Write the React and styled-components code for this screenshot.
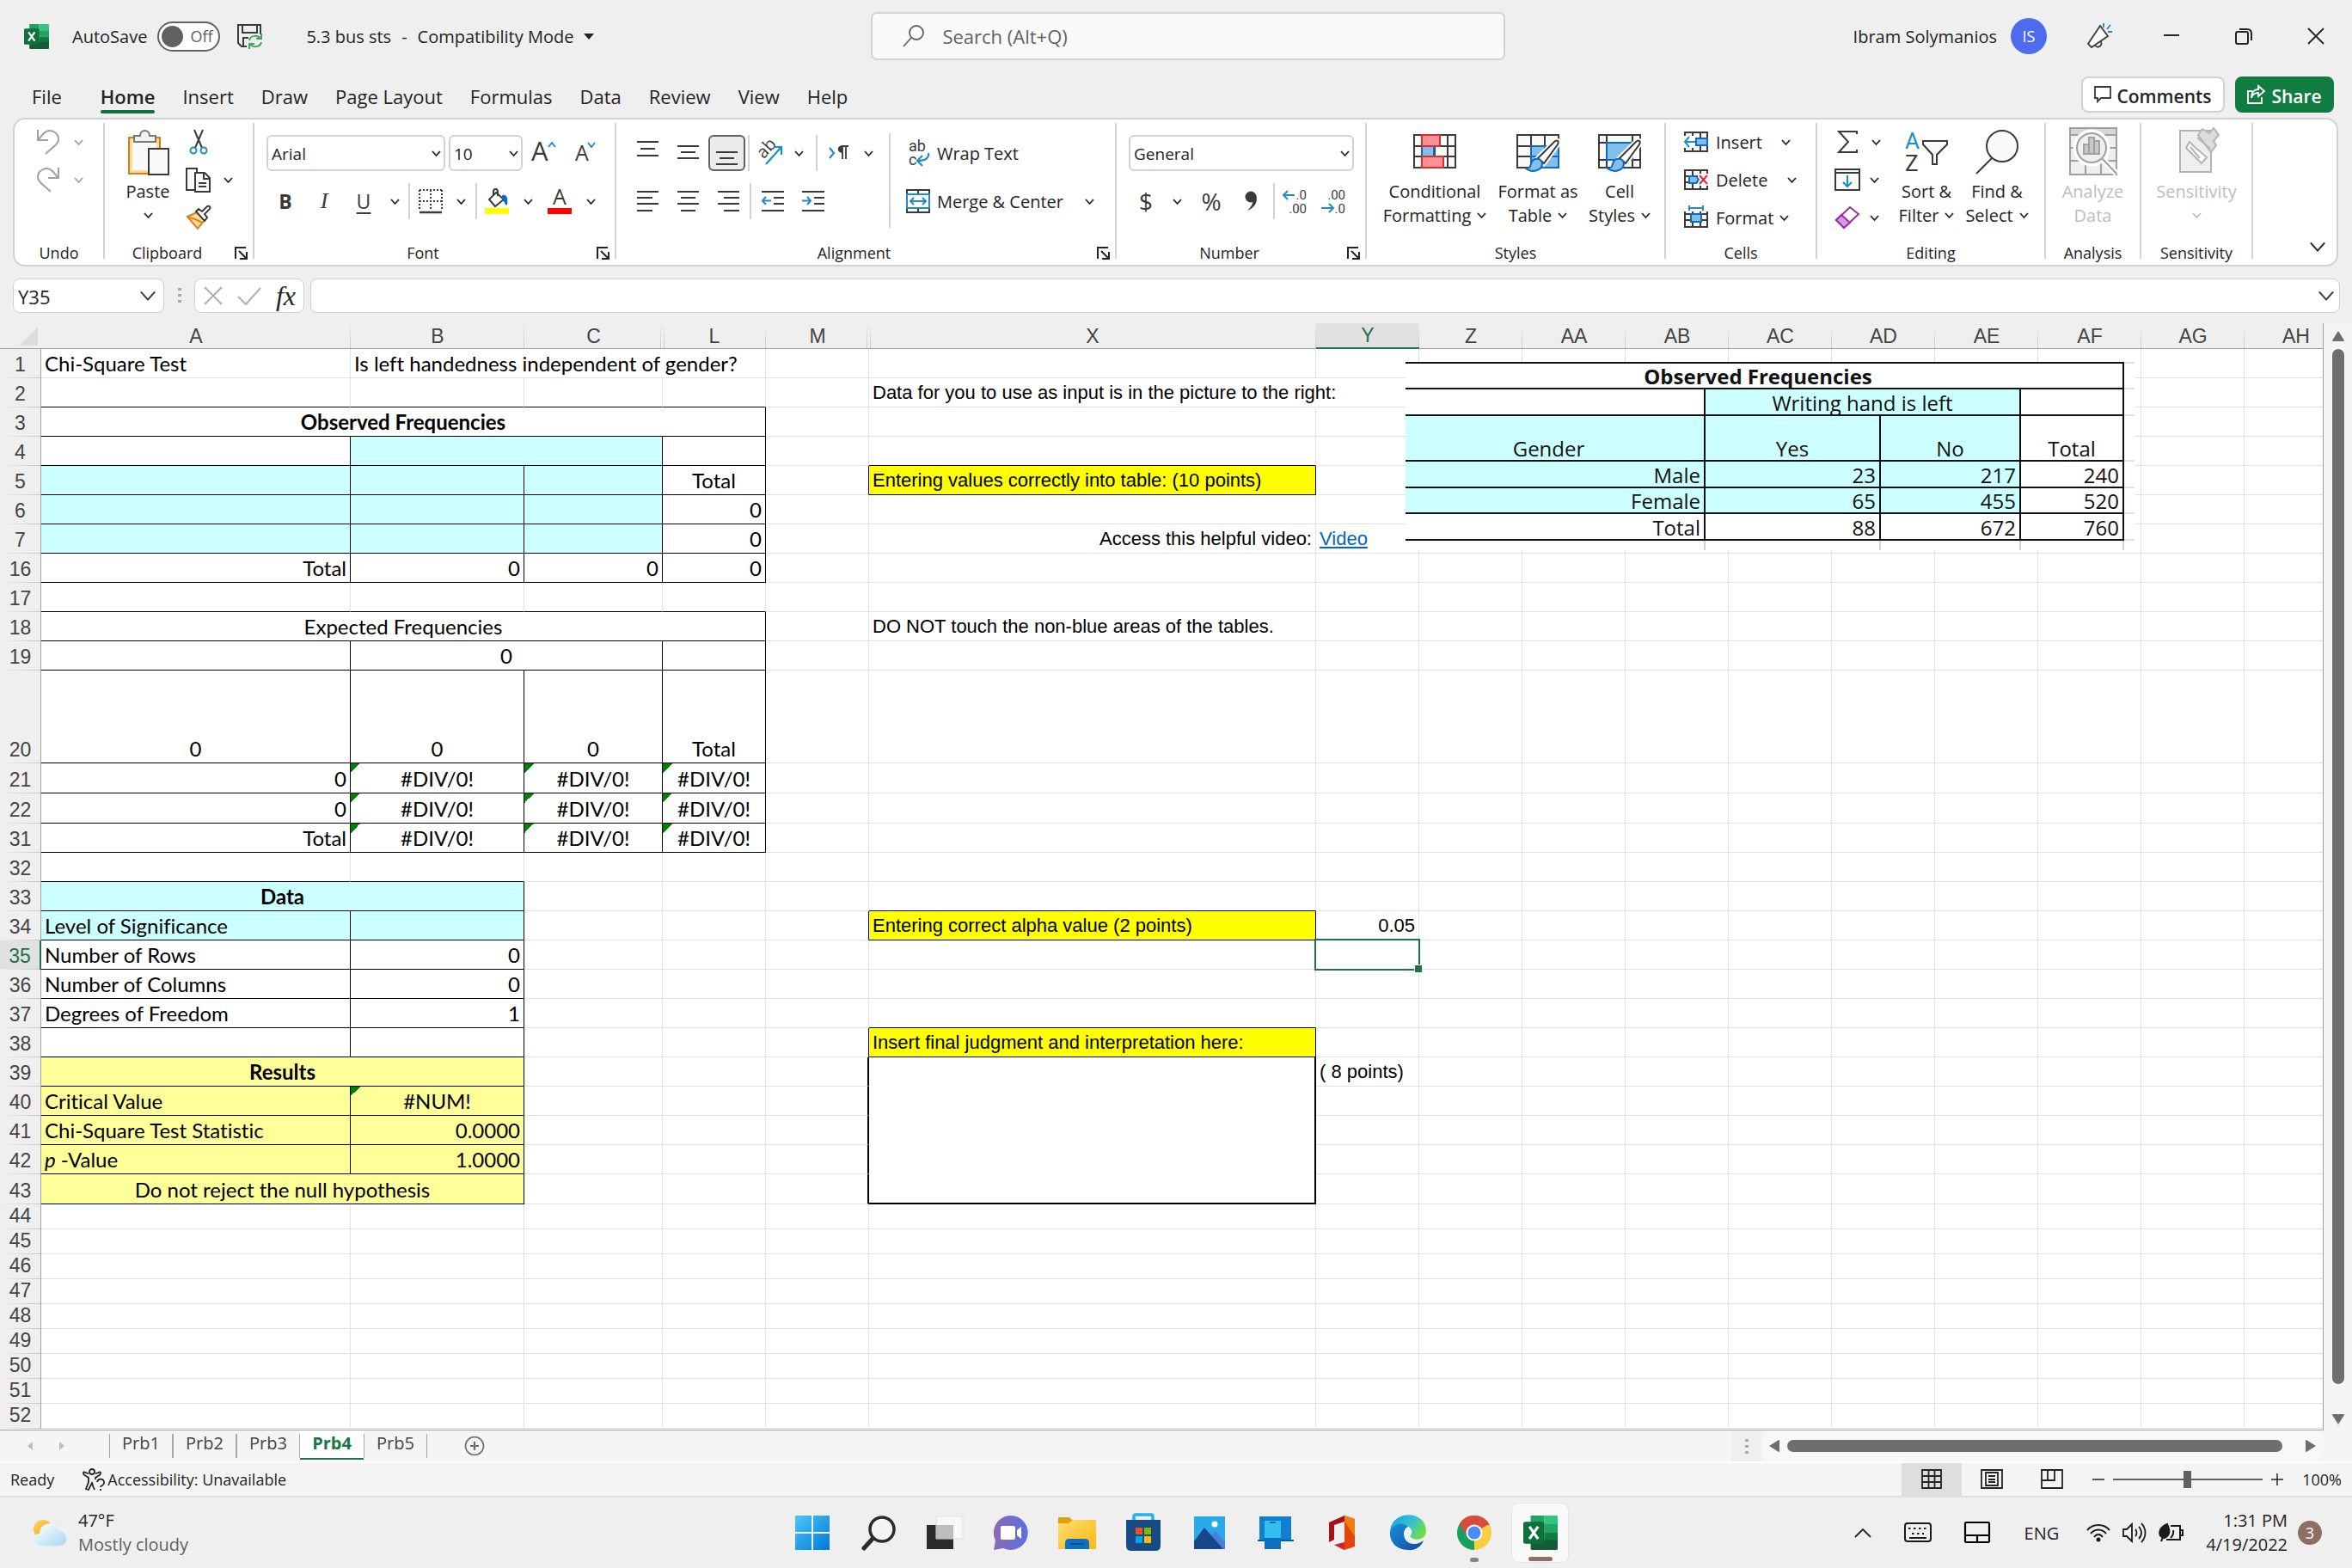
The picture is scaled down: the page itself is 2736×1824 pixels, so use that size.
import React, { useState } from 'react'
import styled, { createGlobalStyle, css } from 'styled-components'

const dark = '#3b3a38'
const blue = '#1e8bcd'
const green = '#217346'

/* ---------- sheet data ---------- */

const columns = [
  { name: 'A', width: 360 },
  { name: 'B', width: 202 },
  { name: 'C', width: 161, hiddenAfter: true },
  { name: 'L', width: 120, hiddenBefore: true },
  { name: 'M', width: 120, hiddenAfter: true },
  { name: 'X', width: 520, hiddenBefore: true },
  { name: 'Y', width: 120 },
  { name: 'Z', width: 120 },
  { name: 'AA', width: 120 },
  { name: 'AB', width: 120 },
  { name: 'AC', width: 120 },
  { name: 'AD', width: 120 },
  { name: 'AE', width: 120 },
  { name: 'AF', width: 120 },
  { name: 'AG', width: 120 },
  { name: 'AH' },
]

const rowNumbers = [
  1, 2, 3, 4, 5, 6, 7, 16, 17, 18, 19, 20, 21, 22, 31, 32, 33, 34, 35, 36, 37, 38,
  39, 40, 41, 42, 43, 44, 45, 46, 47, 48, 49, 50, 51, 52,
]

const rowHeight = (n) => {
  if (n === 20) return 108
  if (n === 21 || n === 22 || n === 43) return 35
  return n > 43 ? 29 : 34
}

const cyan = '#ccffff'
const paleYellow = '#ffff99'
const yellow = '#ffff00'

const cells = {
  A1: { text: 'Chi-Square Test' },
  B1: { text: 'Is left handedness independent of gender?', span: 3 },
  X2: { text: 'Data for you to use as input is in the picture to the right:', span: 2, arial: true },
  A3: { text: 'Observed Frequencies', span: 4, align: 'center', bold: true },
  B4: { span: 2, fill: cyan },
  A5: { fill: cyan },
  B5: { fill: cyan },
  C5: { fill: cyan },
  L5: { text: 'Total', align: 'center' },
  X5: { text: 'Entering values correctly into table: (10 points)', fill: yellow, arial: true },
  A6: { fill: cyan },
  B6: { fill: cyan },
  C6: { fill: cyan },
  L6: { text: '0', align: 'right' },
  A7: { fill: cyan },
  B7: { fill: cyan },
  C7: { fill: cyan },
  L7: { text: '0', align: 'right' },
  X7: { text: 'Access this helpful video:', align: 'right', arial: true },
  Y7: { text: 'Video', link: true, arial: true },
  A16: { text: 'Total', align: 'right' },
  B16: { text: '0', align: 'right' },
  C16: { text: '0', align: 'right' },
  L16: { text: '0', align: 'right' },
  A18: { text: 'Expected Frequencies', span: 4, align: 'center' },
  X18: { text: 'DO NOT touch the non-blue areas of the tables.', arial: true },
  B19: { text: '0', span: 2, align: 'center' },
  A20: { text: '0', align: 'center' },
  B20: { text: '0', align: 'center' },
  C20: { text: '0', align: 'center' },
  L20: { text: 'Total', align: 'center' },
  A21: { text: '0', align: 'right' },
  A22: { text: '0', align: 'right' },
  A31: { text: 'Total', align: 'right' },
  A33: { text: 'Data', span: 2, align: 'center', bold: true, fill: cyan },
  A34: { text: 'Level of Significance', fill: cyan },
  B34: { fill: cyan },
  X34: { text: 'Entering correct alpha value (2 points)', fill: yellow, arial: true },
  Y34: { text: '0.05', align: 'right', arial: true },
  A35: { text: 'Number of Rows' },
  B35: { text: '0', align: 'right' },
  A36: { text: 'Number of Columns' },
  B36: { text: '0', align: 'right' },
  A37: { text: 'Degrees of Freedom' },
  B37: { text: '1', align: 'right' },
  X38: { text: 'Insert final judgment and interpretation here:', fill: yellow, arial: true },
  A39: { text: 'Results', span: 2, align: 'center', bold: true, fill: paleYellow },
  X39: { rows: 5 },
  Y39: { text: '( 8 points)', arial: true },
  A40: { text: 'Critical Value', fill: paleYellow },
  B40: { text: '#NUM!', align: 'center', error: true, fill: paleYellow },
  A41: { text: 'Chi-Square Test Statistic', fill: paleYellow },
  B41: { text: '0.0000', align: 'right', fill: paleYellow },
  A42: { text: <><i>p</i> -Value</>, fill: paleYellow },
  B42: { text: '1.0000', align: 'right', fill: paleYellow },
  A43: { text: 'Do not reject the null hypothesis', span: 2, align: 'center', fill: paleYellow },
}

;['B', 'C', 'L'].forEach((c) => {
  [21, 22, 31].forEach((r) => {
    cells[c + r] = { text: '#DIV/0!', align: 'center', error: true }
  })
})

// ranges that carry a border round every cell: first col, first row, last col, last row, width
const boxes = [
  ['A', 3, 'L', 16, 1],
  ['A', 18, 'L', 31, 1],
  ['A', 33, 'B', 43, 1],
  ['X', 5, 'X', 5, 1],
  ['X', 34, 'X', 34, 1],
  ['X', 38, 'X', 38, 1],
  ['X', 39, 'X', 43, 2],
]

const colIndex = (name) => columns.findIndex((c) => c.name === name)

function edges(c, r) {
  let right = 0
  let bottom = 0
  boxes.forEach(([c1, r1, c2, r2, w]) => {
    const left = colIndex(c1)
    const last = colIndex(c2)
    const top = rowNumbers.indexOf(r1)
    const end = rowNumbers.indexOf(r2)
    const inRows = r >= top && r <= end
    const inCols = c >= left && c <= last
    if (inRows && c >= left - 1 && c <= last) right = Math.max(right, w)
    if (inCols && inRows) bottom = Math.max(bottom, w)
    if (inCols && r === top - 1) bottom = Math.max(bottom, 1)
  })
  return { right, bottom }
}

/* ---------- icons ---------- */

const Chevron = ({ color = '#242424', size = 11 }) => (
  <svg width={size} height={size} viewBox="0 0 11 11" fill="none" stroke={color} strokeWidth={size > 14 ? 1.1 : 1.8}>
    <path d="M1 3l4.5 5L10 3" />
  </svg>
)

const Lines = ({ rows }) => (
  <svg width="28" height="28" viewBox="0 0 28 28" stroke={dark} strokeWidth="2">
    {rows.map(([x1, x2, y]) => <path key={y} d={`M${x1} ${y}H${x2}`} />)}
  </svg>
)

const UndoIcon = () => (
  <svg width="28" height="30" viewBox="0 0 28 30" fill="none" stroke="#a0a0a0" strokeWidth="2">
    <path d="M2 1v12h12M2 13l7-8c6-6 17-2 17 7 0 5-4 7-15 17" />
  </svg>
)

const RedoIcon = () => (
  <svg width="28" height="30" viewBox="0 0 28 30" fill="none" stroke="#a0a0a0" strokeWidth="2">
    <path d="M26 1v12H14M26 13l-7-8C13-1 2 3 2 12c0 5 4 7 15 17" />
  </svg>
)

const SaveIcon = () => (
  <svg width="30" height="30" viewBox="0 0 30 30" fill="none" stroke={dark} strokeWidth="2">
    <path d="M11 27H5l-4-4V2h26v11M6 2v9h17V2M7 27V17h6" />
    <g stroke="#3fa659">
      <path d="M14 20c1-6 10-7 13-2M28 12v6h-6M28 22c-1 6-10 7-13 2M14 30v-6h6" />
    </g>
  </svg>
)

const SearchIcon = () => (
  <svg width="26" height="28" viewBox="0 0 26 28" fill="none" stroke="#616161" strokeWidth="1.8">
    <circle cx="16" cy="10" r="8" />
    <path d="M10 16L1 26" />
  </svg>
)

const ExcelLogo = ({ size = 28 }) => (
  <svg width={size} height={size} viewBox="0 0 28 28">
    <path d="M6 0h11v7H6z" fill="#21a366" />
    <path d="M17 0h10q1 0 1 1v6H17z" fill="#33c481" />
    <path d="M6 7h11v14H6z" fill="#107c41" />
    <path d="M17 7h11v7H17z" fill="#21a366" />
    <path d="M17 14h11v7H17z" fill="#107c41" />
    <path d="M6 20h22v7q0 1-1 1H7q-1 0-1-1z" fill="#185c37" />
    <rect x="0" y="5" width="17" height="18" rx="1.5" fill="#0e703b" />
    <path d="M5 9l7 10M12 9L5 19" stroke="#fff" strokeWidth="2.2" />
  </svg>
)

const MegaphoneIcon = () => (
  <svg width="32" height="32" viewBox="0 0 32 32" fill="#fff" stroke={dark} strokeWidth="1.8">
    <path d="M17 4l9 12L7 29l-4-4zM11 26c2 5 9 2 7-4" />
    <path d="M21 1v5M29 3l-4 5M26 11h5" stroke={blue} />
  </svg>
)

const PasteIcon = () => (
  <svg width="52" height="56" viewBox="0 0 52 56" fill="#fff" strokeWidth="2">
    <path d="M4 12h36v42H4z" fill="#fbdc9b" stroke="#e07b1a" />
    <path d="M8 16h28v34H8z" fill="#fafafa" />
    <path d="M10 17v-7h7c0-8 11-8 11 0h7v7z" fill="#f1f1f1" stroke="#797774" />
    <path d="M27 25h23v30H27z" fill="#fafafa" stroke={dark} />
  </svg>
)

const CutIcon = () => (
  <svg width="28" height="30" viewBox="0 0 28 30" fill="none" stroke={dark} strokeWidth="2">
    <path d="M9 1l9 21M19 1l-9 21" />
    <g stroke={blue}><circle cx="8" cy="25" r="3.5" /><circle cx="20" cy="25" r="3.5" /></g>
  </svg>
)

const CopyIcon = () => (
  <svg width="30" height="30" viewBox="0 0 30 30" fill="#fafafa" stroke={dark} strokeWidth="2">
    <path d="M1 2h12v25H1z" />
    <path d="M11 7h11l6 6v16H11zM21 7v7h7M15 19h9M15 23h9" />
  </svg>
)

const PainterIcon = () => (
  <svg width="30" height="28" viewBox="0 0 30 28" fill="#fff" strokeWidth="2">
    <path d="M2 13l11-5 9 9-8 10z" stroke="#e07b1a" fill="#fbdc9b" />
    <path d="M4 14c6 1 10 3 15 6" stroke="#e07b1a" />
    <path d="M12 7l3-3 4 3 6-6c3-1 4 1 3 3l-6 6 3 4-3 4z" stroke={dark} />
  </svg>
)

const LetterA = ({ up }) => (
  <svg width="30" height="30" viewBox="0 0 30 30" fill="none">
    <text x={up ? 0 : 3} y="24" fontSize={up ? 31 : 25} fill={dark} fontFamily="Open Sans">A</text>
    <path d={up ? 'M20 8l4-5 4 5' : 'M18 3l4 5 4-5'} stroke={blue} strokeWidth="2" />
  </svg>
)

const BordersIcon = () => (
  <svg width="28" height="28" viewBox="0 0 28 28" fill="none" stroke={dark} strokeWidth="2">
    <path d="M1 1h26M1 14h26M1 1v24M14 1v24M27 1v24" strokeDasharray="2 2" />
    <path d="M1 27h26" strokeWidth="2.5" />
  </svg>
)

const BucketIcon = () => (
  <svg width="30" height="30" viewBox="0 0 30 30" fill="#fff" stroke={dark} strokeWidth="2">
    <path d="M13 5l9 8-10 8-7-8zM10 9V4c0-4 5-4 5 0v5" />
    <path d="M21 9c4-1 5 3 4 10-1-4-2-5-4-6z" fill="#0f6cbd" stroke="#0f6cbd" />
    <path d="M0 23h28v7H0z" fill="#ff0" stroke="none" />
  </svg>
)

const FontColorIcon = () => (
  <svg width="30" height="30" viewBox="0 0 30 30">
    <text x="7" y="19" fontSize="25" fill={dark} fontFamily="Open Sans">A</text>
    <path d="M1 23h28v7H1z" fill="red" />
  </svg>
)

const OrientationIcon = () => (
  <svg width="30" height="32" viewBox="0 0 30 32" fill="none">
    <text x="5" y="22" transform="rotate(-48 8 20)" fontSize="20" fill={dark} fontFamily="Open Sans">ab</text>
    <path d="M10 29L27 10M19 9h9v9" stroke={blue} strokeWidth="2.2" />
  </svg>
)

const DirectionIcon = () => (
  <svg width="24" height="28" viewBox="0 0 24 28" fill="none">
    <path d="M1 8l5 6-5 6" stroke={blue} strokeWidth="2.2" />
    <path d="M15 6h8M16 6v15M20 6v15" stroke={dark} strokeWidth="1.8" />
    <path d="M16 5c-7 0-7 9 0 9z" fill={dark} />
  </svg>
)

const WrapIcon = () => (
  <svg width="28" height="32" viewBox="0 0 28 32" fill="none">
    <text x="3" y="14" fontSize="18" fill={dark} fontFamily="Roboto">ab</text>
    <text x="3" y="30" fontSize="18" fill={dark} fontFamily="Roboto">c</text>
    <path d="M26 16c1 6-4 9-12 9M19 19l-6 6 6 6" stroke={blue} strokeWidth="2.2" />
  </svg>
)

const MergeIcon = () => (
  <svg width="28" height="28" viewBox="0 0 28 28" fill="none" stroke={dark} strokeWidth="2">
    <path d="M1 1h26v26H1zM14 1v5M14 22v5" />
    <path d="M1 6h26v16H1z" fill="#fff" stroke={blue} />
    <path d="M5 14h18M9 10l-4 4 4 4M19 10l4 4-4 4" stroke={blue} />
  </svg>
)

const IndentIcon = ({ flip }) => (
  <svg width="28" height="28" viewBox="0 0 28 28" fill="none" stroke={dark} strokeWidth="2">
    <path d="M1 3h26M15 10h12M15 17h12M1 25h26" />
    <path d={flip ? 'M1 13.500h10M7 9l4 4.500-4 4.500' : 'M12 13.500H2M6 9l-4 4.500 4 4.500'} stroke={blue} />
  </svg>
)

const DecimalIcon = ({ more }) => (
  <svg width="30" height="32" viewBox="0 0 30 32" fill="none">
    <text x="29" y="14" textAnchor="end" fontSize="15" fill={dark} fontFamily="Roboto">{more ? '.0' : '.00'}</text>
    <text x="29" y="30" textAnchor="end" fontSize="15" fill={dark} fontFamily="Roboto">{more ? '.00' : '.0'}</text>
    <path d={more ? 'M15 9H2M7 4L2 9l5 5' : 'M1 24h14M10 19l5 5-5 5'} stroke={blue} strokeWidth="2" />
  </svg>
)

const Brush = () => (
  <g strokeWidth="2">
    <path d="M28 36L47 17c3-3 6-1 4 3L35 42z" stroke="#fff" strokeWidth="6" fill="#fff" />
    <path d="M28 36L47 17c3-3 6-1 4 3L35 42z" stroke={dark} fill="#fff" />
    <path d="M14 48c6 0 5-4 7-8 3-5 11-4 12 2 0 8-11 12-19 6z" fill="#83beec" stroke="#0f6cbd" />
  </g>
)

const ConditionalIcon = () => (
  <svg width="56" height="56" viewBox="0 0 56 56" fill="none" stroke={dark} strokeWidth="2">
    <path d="M4 9h48v38H4zM4 22h48M4 34h48M13 9v38M28 9v38M43 9v38" fill="#fafafa" />
    <path d="M13 22h14v12H13z" fill="#83beec" stroke="#0f6cbd" />
    <path d="M13 9h21v13H13zM13 34h25v13H13z" fill="#ff9196" stroke="#d92c2c" />
  </svg>
)

const FormatTableIcon = () => (
  <svg width="56" height="56" viewBox="0 0 56 56" fill="none" stroke={dark} strokeWidth="2">
    <path d="M4 9h48v38H4z" fill="#fafafa" />
    <path d="M20 22h32v25H20z" fill="#83beec" stroke="none" />
    <path d="M4 22h48M4 34h48M20 9v38M36 9v38" />
    <path d="M20 22h32v25H20zM20 34h32M36 22v25" stroke="#0f6cbd" />
    <Brush />
  </svg>
)

const CellStylesIcon = () => (
  <svg width="56" height="56" viewBox="0 0 56 56" fill="none" stroke={dark} strokeWidth="2">
    <path d="M4 9h48v38H4zM4 18h48M4 38h48M13 9v38M43 9v38" fill="#fafafa" />
    <path d="M13 18h30v20H13z" fill="#83beec" stroke="#0f6cbd" />
    <Brush />
  </svg>
)

const CellsIcon = ({ kind }) => (
  <svg width="30" height="30" viewBox="0 0 30 30" fill="none" stroke={dark} strokeWidth="2">
    <path d="M2 4h26v22H2zM2 11h26M2 18h26M11 4v22M20 4v22" fill="#fafafa" />
    {kind === 'insert' && (
      <>
        <path d="M15 11h13v8H15z" fill="#83beec" stroke="#0f6cbd" />
        <path d="M0 8h14v14H0z" fill="#fff" stroke="none" />
        <path d="M14 15H2M7 9l-5 6 5 6" stroke={blue} />
      </>
    )}
    {kind === 'delete' && (
      <>
        <path d="M17 8h13v14H17z" fill="#fff" stroke="none" />
        <path d="M7 11h8l3 4-3 4H7z" fill="#83beec" stroke="#0f6cbd" />
        <path d="M19 10l9 10M28 10l-9 10" stroke="#d92c2c" />
      </>
    )}
    {kind === 'format' && (
      <>
        <path d="M0 0h30v8H0z" fill="#fff" stroke="none" />
        <path d="M7 4h16M7 1v6M23 1v6" stroke={blue} />
        <path d="M9 11h12v9H9z" fill="#83beec" stroke="#0f6cbd" />
      </>
    )}
  </svg>
)

const SigmaIcon = () => (
  <svg width="28" height="30" viewBox="0 0 28 30" fill="none" stroke={dark} strokeWidth="2">
    <path d="M25 6V3H4l11 12L4 27h21v-3" />
  </svg>
)

const FillIcon = () => (
  <svg width="30" height="28" viewBox="0 0 30 28" fill="#fafafa" stroke={dark} strokeWidth="2">
    <path d="M1 2h28v24H1zM1 6h28" />
    <path d="M15 9v13M10 17l5 5 5-5" stroke={blue} fill="none" />
  </svg>
)

const EraserIcon = () => (
  <svg width="30" height="28" viewBox="0 0 30 28" fill="#fff" stroke="#9a2fa4" strokeWidth="2">
    <path d="M2 17L18 2l10 8-17 16z" />
    <path d="M2 17l6-6 10 9-7 6z" fill="#d69bdc" />
  </svg>
)

const SortIcon = () => (
  <svg width="56" height="56" viewBox="0 0 56 56" fill="#fafafa">
    <text x="3" y="25" fontSize="26" fill={blue} fontFamily="Roboto">A</text>
    <text x="3" y="51" fontSize="26" fill={dark} fontFamily="Roboto">Z</text>
    <path d="M24 16h28v4L40 32v11h-5V32L24 20z" stroke={dark} strokeWidth="2" />
  </svg>
)

const FindIcon = () => (
  <svg width="56" height="56" viewBox="0 0 56 56" fill="#fafafa" stroke={dark} strokeWidth="2">
    <circle cx="34" cy="22" r="18" />
    <path d="M22 36L4 54" />
  </svg>
)

const AnalyzeIcon = () => (
  <svg width="56" height="56" viewBox="0 0 56 56" fill="#efefef" stroke="#a0a0a0" strokeWidth="2">
    <path d="M1 1h54v54H1zM1 9h54M1 24h54M1 39h54M19 39v16M37 39v16" />
    <path d="M2 2h52v6H2z" fill="#d6d6d6" stroke="none" />
    <circle cx="26" cy="24" r="19" stroke="#fff" strokeWidth="5" />
    <path d="M39 37l16 17" stroke="#fff" strokeWidth="7" />
    <circle cx="26" cy="24" r="17" />
    <path d="M38 36l17 18" />
    <path d="M17 20h6v11h-6zM23 12h6v19h-6zM29 16h6v15h-6z" fill="#c8c8c8" />
  </svg>
)

const SensitivityIcon = () => (
  <svg width="56" height="56" viewBox="0 0 56 56" fill="#efefef" stroke="#b4b4b4" strokeWidth="2">
    <path d="M9 4h36v48H9z" />
    <path d="M20 17l6 6 14 12-6 7-18-18z" fill="#fff" />
    <path d="M21 23l11 13" />
    <path d="M30 9l5-7 8 5 5-6 6 8-6 7 3 5-6 8z" fill="#dcdcdc" />
    <path d="M29 12l15 13" />
  </svg>
)

const LauncherIcon = () => (
  <svg width="15" height="15" viewBox="0 0 15 15" fill="none" stroke="#242424" strokeWidth="2">
    <path d="M1 14V1h12M5 5l8 8M14 6v8H6" />
  </svg>
)

const AccessibilityIcon = () => (
  <svg width="28" height="26" viewBox="0 0 28 26" fill="none" stroke="#242424" strokeWidth="1.8">
    <circle cx="12" cy="4" r="3" />
    <path d="M8 6C5 6 3 3 2 5c-1 3 4 4 6 6v5l-3 8 3 1 4-8 1 2M16 6c3 0 5-3 6-1 1 3-4 4-6 6v2" />
    <path d="M18 16c1-5 9-4 8 1 0 3-4 3-4 5M22 24v2M12 18l3 7" />
  </svg>
)

const WeatherIcon = () => (
  <svg width="40" height="34" viewBox="0 0 40 34">
    <defs>
      <linearGradient id="sun" x1="0" y1="0" x2="1" y2="1"><stop offset="0" stopColor="#ffd75a" /><stop offset="1" stopColor="#f59a1b" /></linearGradient>
      <linearGradient id="cloud" x1="0" y1="0" x2="1" y2="1"><stop offset="0" stopColor="#fff" /><stop offset="1" stopColor="#a9d6f2" /></linearGradient>
    </defs>
    <circle cx="12" cy="13" r="11" fill="url(#sun)" />
    <path d="M10 32c-11 0-11-14-2-14 0-14 20-16 23-3 10 0 12 17 0 17z" fill="url(#cloud)" />
  </svg>
)

/* ---------- taskbar icons ---------- */

const WindowsIcon = () => (
  <svg width="42" height="42" viewBox="0 0 42 42">
    <defs><linearGradient id="win" x1="0" y1="0" x2="1" y2="1"><stop offset="0" stopColor="#4cc7fb" /><stop offset="1" stopColor="#0078d4" /></linearGradient></defs>
    <path d="M1 1h19v19H1zM22 1h19v19H22zM1 22h19v19H1zM22 22h19v19H22z" fill="url(#win)" />
  </svg>
)

const TaskSearchIcon = () => (
  <svg width="42" height="42" viewBox="0 0 42 42" fill="none" stroke="#2b2b2b">
    <circle cx="25" cy="17" r="14" strokeWidth="3.5" fill="#f4f4f4" />
    <path d="M14 28L4 39" strokeWidth="5" strokeLinecap="round" />
  </svg>
)

const TaskViewIcon = () => (
  <svg width="42" height="42" viewBox="0 0 42 42">
    <path d="M0 12h31v28H0z" fill="#2c2b29" />
    <path d="M11 2h31v26H11z" fill="#f8f8f8" stroke="#dedede" />
    <path d="M11 12h20v16H11z" fill="#bdbdbd" />
  </svg>
)

const ChatIcon = () => (
  <svg width="42" height="42" viewBox="0 0 42 42">
    <defs><linearGradient id="chat" x1="0" y1="0" x2="1" y2="0"><stop offset="0" stopColor="#8a6bb5" /><stop offset="1" stopColor="#5b6fe0" /></linearGradient></defs>
    <path d="M21 1a20 20 0 1 1-9 38L1 41l2-11A20 20 0 0 1 21 1z" fill="url(#chat)" />
    <rect x="9" y="13" width="17" height="16" rx="2" fill="#fff" />
    <path d="M28 18l5-4v14l-5-4z" fill="#fff" />
  </svg>
)

const FolderIcon = () => (
  <svg width="44" height="42" viewBox="0 0 44 42">
    <defs><linearGradient id="folder" x1="0" y1="0" x2="1" y2="1"><stop offset="0" stopColor="#ffdc70" /><stop offset="1" stopColor="#f9b90f" /></linearGradient></defs>
    <path d="M0 3h13l5 5-4 6H0z" fill="#dea00f" />
    <path d="M0 10h12l5-4h27v34H0z" fill="url(#folder)" />
    <path d="M8 40v-7q0-5 5-5h18q5 0 5 5v7z" fill="#0f6fc0" />
    <path d="M14 34h16" stroke="#0a4f8d" strokeWidth="2" />
  </svg>
)

const StoreIcon = () => (
  <svg width="42" height="44" viewBox="0 0 42 44">
    <path d="M10 9V3q0-2 2-2h18q2 0 2 2v6" fill="none" stroke="#1fb2ee" strokeWidth="3.5" />
    <path d="M1 7h40v30q0 6-6 6H7q-6 0-6-6z" fill="#174b85" />
    <path d="M12 16h8v8h-8z" fill="#f25022" />
    <path d="M22 16h8v8h-8z" fill="#7fba00" />
    <path d="M12 26h8v8h-8z" fill="#00a4ef" />
    <path d="M22 26h8v8h-8z" fill="#ffb900" />
  </svg>
)

const PhotosIcon = () => (
  <svg width="38" height="40" viewBox="0 0 38 40">
    <path d="M1 1h36v38H1z" fill="#2aa9ea" />
    <path d="M15 30l11-12 11 13v8H15z" fill="#4a7fd6" />
    <path d="M1 30l12-16 22 25H1z" fill="#17478b" />
    <circle cx="25" cy="10" r="3.5" fill="#fff" />
  </svg>
)

const PhoneIcon = () => (
  <svg width="42" height="42" viewBox="0 0 42 42">
    <path d="M2 2h37v27H2z" fill="#1180cc" />
    <path d="M0 29h42v2H0z" fill="#0b5c9b" />
    <path d="M8 7h19v33H8z" fill="#0f6fc0" />
    <path d="M8 7h19v20H8z" fill="#35bdf1" />
    <path d="M14 9h7" stroke="#0b5c9b" strokeWidth="1.5" />
  </svg>
)

const OfficeIcon = () => (
  <svg width="34" height="42" viewBox="0 0 34 42">
    <path d="M20 1l12 4v32l-12 4-12-6 12 1z" fill="#e2440b" />
    <path d="M20 1L2 9v23l6-3V12l12-4z" fill="#a3131b" />
    <path d="M8 35l12-3v9z" fill="#d5202f" />
    <path d="M20 1l12 4v20L20 8z" fill="#f07d12" />
  </svg>
)

const EdgeIcon = () => (
  <svg width="44" height="42" viewBox="0 0 44 42">
    <defs>
      <linearGradient id="edgeA" x1="0" y1="0" x2="1" y2="0.5"><stop offset="0" stopColor="#1a9fe0" /><stop offset="0.6" stopColor="#35c1d0" /><stop offset="1" stopColor="#6fdc4a" /></linearGradient>
      <linearGradient id="edgeB" x1="0" y1="0" x2="1" y2="1"><stop offset="0" stopColor="#1690dd" /><stop offset="1" stopColor="#124a97" /></linearGradient>
    </defs>
    <path d="M1 20C2-6 43-6 43 19c0 9-10 12-17 8-4-3 2-4 0-9C22 9 5 9 1 20z" fill="url(#edgeA)" />
    <path d="M1 20C4 9 17 9 22 14c-8 3-7 20 7 20 5 0 8-2 11-4-3 8-11 12-18 11C8 41 0 31 1 20z" fill="url(#edgeB)" />
  </svg>
)

const ChromeIcon = () => (
  <svg width="40" height="40" viewBox="0 0 40 40">
    <path d="M20 20L2.7 10A20 20 0 0 1 37.3 10z" fill="#d94b3d" />
    <path d="M20 20L37.3 10A20 20 0 0 1 20 40z" fill="#ffcd40" />
    <path d="M20 20V40A20 20 0 0 1 2.7 10z" fill="#17a05e" />
    <path d="M20 11h17.8A20 20 0 0 0 2.7 10l9.5 14.5z" fill="#d94b3d" />
    <circle cx="20" cy="20" r="9.5" fill="#fff" />
    <circle cx="20" cy="20" r="7.5" fill="#4c8bf5" />
  </svg>
)

/* ---------- parts ---------- */

function Big({ icon, lines, width, arrow, disabled }) {
  return (
    <BigButton $w={width} disabled={disabled}>
      {icon}
      {lines.map((l, i) => (
        <BigLine key={l}>
          {l}
          {arrow && i === lines.length - 1 && <Chevron />}
        </BigLine>
      ))}
    </BigButton>
  )
}

function Drop({ label, value, width }) {
  return (
    <SelectWrap $w={width}>
      <Select aria-label={label} defaultValue={value}>
        <option>{value}</option>
      </Select>
      <Chevron />
    </SelectWrap>
  )
}

const Arrow = ({ width, label, color }) => (
  <Tool $w={width} aria-label={label}><Chevron color={color} /></Tool>
)

function RibbonGroup({ name, width, launcher, children }) {
  return (
    <Group $w={width}>
      <GroupBody>{children}</GroupBody>
      <GroupFoot>
        <Caption>{name}</Caption>
        {launcher && <Launcher aria-label={name + ' settings'}><LauncherIcon /></Launcher>}
      </GroupFoot>
    </Group>
  )
}

function Ribbon() {
  return (
    <RibbonBar>
      <RibbonGroup name="Undo" width={105}>
        <Stack $left={20}>
          <Row><Tool $w={38} aria-label="Undo"><UndoIcon /></Tool><Arrow width={32} label="Undo list" color="#a0a0a0" /></Row>
          <Row><Tool $w={38} aria-label="Redo"><RedoIcon /></Tool><Arrow width={32} label="Redo list" color="#a0a0a0" /></Row>
        </Stack>
      </RibbonGroup>
      <RibbonGroup name="Clipboard" width={174} launcher>
        <Stack $left={10}>
          <BigButton $w={80}>
            <PasteIcon />
            <BigLine>Paste</BigLine>
            <BigLine><Chevron /></BigLine>
          </BigButton>
        </Stack>
        <Stack>
          <Row><Tool $w={38} aria-label="Cut"><CutIcon /></Tool></Row>
          <Row><Tool $w={38} aria-label="Copy"><CopyIcon /></Tool><Arrow width={30} label="Copy options" /></Row>
          <Row><Tool $w={38} aria-label="Format Painter"><PainterIcon /></Tool></Row>
        </Stack>
      </RibbonGroup>
      <RibbonGroup name="Font" width={421} launcher>
        <Stack $left={14} $top={7}>
          <Row $tall>
            <Drop label="Font" value="Arial" width={208} />
            <Gap $w={4} />
            <Drop label="Font size" value="10" width={86} />
            <Tool $w={50} aria-label="Increase font size"><LetterA up /></Tool>
            <Tool $w={46} aria-label="Decrease font size"><LetterA /></Tool>
          </Row>
          <Row $tall>
            <Tool $w={44} $bold>B</Tool>
            <Tool $w={46} $serif>I</Tool>
            <Tool $w={46} $under>U</Tool>
            <Arrow width={26} label="Underline styles" />
            <Divider $w={8} />
            <Tool $w={42} aria-label="Borders"><BordersIcon /></Tool>
            <Arrow width={28} label="Border styles" />
            <Divider $w={8} />
            <Tool $w={42} aria-label="Fill color"><BucketIcon /></Tool>
            <Arrow width={28} label="Fill colors" />
            <Tool $w={46} aria-label="Font color"><FontColorIcon /></Tool>
            <Arrow width={26} label="Font colors" />
          </Row>
        </Stack>
      </RibbonGroup>
      <RibbonGroup name="Alignment" width={582} launcher>
        <Stack $left={13} $top={7}>
          <Row $tall>
            <Tool $w={47} aria-label="Top align"><Lines rows={[[1, 26, 1], [5, 22, 9], [1, 26, 17]]} /></Tool>
            <Tool $w={47} aria-label="Middle align"><Lines rows={[[1, 26, 6], [5, 22, 13], [1, 26, 20]]} /></Tool>
            <Tool $w={43} $on aria-label="Bottom align"><Lines rows={[[1, 26, 13], [5, 22, 20], [1, 26, 27]]} /></Tool>
            <Divider $w={8} />
            <Tool $w={42} aria-label="Orientation"><OrientationIcon /></Tool>
            <Arrow width={24} label="Orientation options" />
            <Divider $w={18} />
            <Tool $w={34} aria-label="Text direction"><DirectionIcon /></Tool>
            <Arrow width={34} label="Direction options" />
          </Row>
          <Row $tall>
            <Tool $w={47} aria-label="Align left"><Lines rows={[[1, 26, 3], [1, 19, 10], [1, 26, 17], [1, 19, 25]]} /></Tool>
            <Tool $w={47} aria-label="Center"><Lines rows={[[1, 26, 3], [5, 22, 10], [1, 26, 17], [5, 22, 25]]} /></Tool>
            <Tool $w={47} aria-label="Align right"><Lines rows={[[1, 26, 3], [8, 26, 10], [1, 26, 17], [8, 26, 25]]} /></Tool>
            <Divider $w={4} />
            <Tool $w={47} aria-label="Decrease indent"><IndentIcon /></Tool>
            <Tool $w={47} aria-label="Increase indent"><IndentIcon flip /></Tool>
          </Row>
        </Stack>
        <TallDivider />
        <Stack $left={18} $top={7}>
          <Row $tall><TextTool><WrapIcon />Wrap Text</TextTool></Row>
          <Row $tall><TextTool><MergeIcon />Merge &amp; Center</TextTool><Arrow width={60} label="Merge options" /></Row>
        </Stack>
      </RibbonGroup>
      <RibbonGroup name="Number" width={291} launcher>
        <Stack $left={14} $top={7}>
          <Row $tall><Drop label="Number format" value="General" width={262} /></Row>
          <Row $tall>
            <Tool $w={40} $large>$</Tool>
            <Arrow width={32} label="Currencies" />
            <Tool $w={48} $large>%</Tool>
            <Tool $w={46} aria-label="Comma style">
              <svg width="16" height="26" viewBox="0 0 16 26" fill={dark}><circle cx="7" cy="8" r="6.5" /><path d="M13 6c3 8-2 15-10 18 5-5 7-9 6-13z" /></svg>
            </Tool>
            <Divider $w={6} />
            <Tool $w={42} aria-label="Increase decimal"><DecimalIcon more /></Tool>
            <Tool $w={48} aria-label="Decrease decimal"><DecimalIcon /></Tool>
          </Row>
        </Stack>
      </RibbonGroup>
      <RibbonGroup name="Styles" width={348}>
        <Gap $w={12} />
        <Big width={134} icon={<ConditionalIcon />} lines={['Conditional', 'Formatting']} arrow />
        <Big width={106} icon={<FormatTableIcon />} lines={['Format as', 'Table']} arrow />
        <Big width={84} icon={<CellStylesIcon />} lines={['Cell', 'Styles']} arrow />
      </RibbonGroup>
      <RibbonGroup name="Cells" width={176}>
        <Stack $left={20}>
          <Row><TextTool><CellsIcon kind="insert" />Insert</TextTool><Arrow width={56} label="Insert options" /></Row>
          <Row><TextTool><CellsIcon kind="delete" />Delete</TextTool><Arrow width={56} label="Delete options" /></Row>
          <Row><TextTool><CellsIcon kind="format" />Format</TextTool><Arrow width={24} label="Format options" /></Row>
        </Stack>
      </RibbonGroup>
      <RibbonGroup name="Editing" width={266}>
        <Stack $left={20}>
          <Row><Tool $w={30} aria-label="AutoSum"><SigmaIcon /></Tool><Arrow width={36} label="Sum options" /></Row>
          <Row><Tool $w={30} aria-label="Fill"><FillIcon /></Tool><Arrow width={32} label="Fill options" /></Row>
          <Row><Tool $w={30} aria-label="Clear"><EraserIcon /></Tool><Arrow width={32} label="Clear options" /></Row>
        </Stack>
        <Big width={82} icon={<SortIcon />} lines={['Sort &', 'Filter']} arrow />
        <Big width={82} icon={<FindIcon />} lines={['Find &', 'Select']} arrow />
      </RibbonGroup>
      <RibbonGroup name="Analysis" width={111}>
        <Big width={111} icon={<AnalyzeIcon />} lines={['Analyze', 'Data']} disabled />
      </RibbonGroup>
      <RibbonGroup name="Sensitivity" width={130}>
        <BigButton $w={130} disabled>
          <SensitivityIcon />
          <BigLine>Sensitivity</BigLine>
          <BigLine><Chevron color="#bdbdbd" /></BigLine>
        </BigButton>
      </RibbonGroup>
      <Collapse aria-label="Collapse ribbon"><Chevron size={20} /></Collapse>
    </RibbonBar>
  )
}

function SheetRow({ n, r }) {
  const out = []
  let c = 0
  while (c < columns.length) {
    const name = columns[c].name
    const cell = cells[name + n] || {}
    const span = cell.span || 1
    const { right, bottom } = edges(c + span - 1, r)
    // X40:X43 belong to the merged answer box
    if (!(name === 'X' && n > 39 && n < 44)) {
      out.push(
        <Cell
          key={name}
          colSpan={span}
          rowSpan={cell.rows}
          $align={cell.align}
          $fill={cell.fill}
          $bold={cell.bold}
          $arial={cell.arial}
          $error={cell.error}
          $right={right}
          $bottom={cell.rows ? 2 : bottom}
          $active={name === 'Y' && n === 35}
        >
          {cell.link ? <SheetLink href="#video">{cell.text}</SheetLink> : cell.text}
        </Cell>
      )
    }
    c += span
  }
  return (
    <tr>
      <RowHead scope="row" $h={rowHeight(n)} $on={n === 35}>{n}</RowHead>
      {out}
    </tr>
  )
}

function Picture() {
  return (
    <PictureFrame>
      <PictureTable>
        <colgroup>
          <col style={{ width: 363 }} />
          <col style={{ width: 204 }} />
          <col style={{ width: 163 }} />
          <col style={{ width: 120 }} />
          <col style={{ width: 12 }} />
        </colgroup>
        <tbody>
          <tr><PicCell colSpan={4} $h={32} $top $bold>Observed Frequencies</PicCell><Stub $top /></tr>
          <tr><PicCell $h={31} /><PicCell colSpan={2} $fill>Writing hand is left</PicCell><PicCell /><Stub /></tr>
          <tr><PicCell $h={53} $fill>Gender</PicCell><PicCell $fill>Yes</PicCell><PicCell $fill>No</PicCell><PicCell>Total</PicCell><Stub /></tr>
          <tr><PicCell $h={31} $fill $end>Male</PicCell><PicCell $fill $end>23</PicCell><PicCell $fill $end>217</PicCell><PicCell $end>240</PicCell><Stub /></tr>
          <tr><PicCell $h={30} $fill $end>Female</PicCell><PicCell $fill $end>65</PicCell><PicCell $fill $end>455</PicCell><PicCell $end>520</PicCell><Stub /></tr>
          <tr><PicCell $h={31} $end>Total</PicCell><PicCell $end>88</PicCell><PicCell $end>672</PicCell><PicCell $end>760</PicCell><Stub /></tr>
          <tr><Tail /><Tail /><Tail /><Tail /><td /></tr>
        </tbody>
      </PictureTable>
    </PictureFrame>
  )
}

const tabs = ['File', 'Home', 'Insert', 'Draw', 'Page Layout', 'Formulas', 'Data', 'Review', 'View', 'Help']
const sheets = ['Prb1', 'Prb2', 'Prb3', 'Prb4', 'Prb5']

function App() {
  const [autoSave, setAutoSave] = useState(false)
  const [zoom, setZoom] = useState(100)

  return (
    <Page>
      <Global />
      <TitleBar>
        <TitleLeft>
          <ExcelLogo size={29} />
          <AutoSave>
            AutoSave
            <Toggle>
              <input type="checkbox" checked={autoSave} onChange={(e) => setAutoSave(e.target.checked)} />
              <Knob />
              {autoSave ? 'On' : 'Off'}
            </Toggle>
          </AutoSave>
          <PlainButton aria-label="Save"><SaveIcon /></PlainButton>
          <FileName>
            <span>5.3 bus sts</span><span>-</span><span>Compatibility Mode</span>
            <svg width="12" height="9" viewBox="0 0 12 9"><path d="M0 1h12L6 8z" fill="#242424" /></svg>
          </FileName>
        </TitleLeft>
        <SearchBox>
          <SearchIcon />
          <input type="text" placeholder="Search (Alt+Q)" aria-label="Search" />
        </SearchBox>
        <TitleRight>
          <span>Ibram Solymanios</span>
          <Avatar>IS</Avatar>
          <PlainButton aria-label="What's new"><MegaphoneIcon /></PlainButton>
          <WindowButtons>
            <PlainButton aria-label="Minimize">
              <svg width="20" height="20" stroke="#242424" strokeWidth="2"><path d="M1 9h18" /></svg>
            </PlainButton>
            <PlainButton aria-label="Restore">
              <svg width="20" height="20" fill="none" stroke="#242424" strokeWidth="2"><rect x="1" y="5" width="14" height="14" rx="2" /><path d="M5 2h9q5 0 5 5v8" /></svg>
            </PlainButton>
            <PlainButton aria-label="Close">
              <svg width="20" height="20" stroke="#242424" strokeWidth="1.8"><path d="M1 1l18 18M19 1L1 19" /></svg>
            </PlainButton>
          </WindowButtons>
        </TitleRight>
      </TitleBar>

      <TabRow>
        {tabs.map((t) => <Tab key={t} $on={t === 'Home'} $file={t === 'File'}>{t}</Tab>)}
        <Actions>
          <CommentsButton>
            <svg width="20" height="20" fill="none" stroke="#3b3a38" strokeWidth="1.8"><path d="M1 1h18v13H8l-4 4v-4H1z" /></svg>
            Comments
          </CommentsButton>
          <ShareButton>
            <svg width="22" height="22" fill="none" stroke="#fff" strokeWidth="1.8"><path d="M6 7H1v14h16v-7M13 1l7 6-7 6V9c-5 0-7 2-8 6 0-7 3-10 8-10z" /></svg>
            Share
          </ShareButton>
        </Actions>
      </TabRow>

      <Ribbon />

      <FormulaRow>
        <NameBox>
          <input type="text" defaultValue="Y35" aria-label="Name box" />
          <Chevron size={20} color={dark} />
        </NameBox>
        <Dots><i /><i /><i /></Dots>
        <FormulaTools>
          <PlainButton aria-label="Cancel"><svg width="24" height="24" stroke="#b0b0b0" strokeWidth="2"><path d="M2 2l20 20M22 2L2 22" /></svg></PlainButton>
          <PlainButton aria-label="Enter"><svg width="28" height="24" fill="none" stroke="#b0b0b0" strokeWidth="2"><path d="M1 13l9 9L27 3" /></svg></PlainButton>
          <FxButton>fx</FxButton>
        </FormulaTools>
        <FormulaBox>
          <input type="text" aria-label="Formula bar" />
          <Chevron size={20} color={dark} />
        </FormulaBox>
      </FormulaRow>

      <SheetArea>
        <GridWrap>
          <Grid>
            <colgroup>
              <col style={{ width: 48 }} />
              {columns.map((c) => <col key={c.name} style={{ width: c.width }} />)}
            </colgroup>
            <thead>
              <tr>
                <Corner />
                {columns.map((c) => (
                  <ColHead key={c.name} scope="col" $on={c.name === 'Y'} $after={c.hiddenAfter} $before={c.hiddenBefore}>
                    {c.name}
                  </ColHead>
                ))}
              </tr>
            </thead>
            <tbody>
              {rowNumbers.map((n, r) => <SheetRow key={n} n={n} r={r} />)}
            </tbody>
          </Grid>
          <Picture />
        </GridWrap>
        <VScroll>
          <svg width="16" height="14"><path d="M8 1l7 11q0 1-1 1H2q-1 0-1-1z" fill="#6e6e6e" /></svg>
          <VThumb />
          <svg width="16" height="14"><path d="M8 13L1 2q0-1 1-1h12q1 0 1 1z" fill="#6e6e6e" /></svg>
        </VScroll>
      </SheetArea>

      <SheetTabs>
        <SheetNav>
          <PlainButton aria-label="Previous sheet"><svg width="8" height="12"><path d="M7 1v10L1 6z" fill="#bdbdbd" /></svg></PlainButton>
          <PlainButton aria-label="Next sheet"><svg width="8" height="12"><path d="M1 1v10l6-5z" fill="#bdbdbd" /></svg></PlainButton>
        </SheetNav>
        {sheets.map((s) => <SheetTab key={s} $on={s === 'Prb4'}>{s}</SheetTab>)}
        <AddSheet aria-label="New sheet">
          <svg width="24" height="24" fill="none" stroke="#6e6e6e" strokeWidth="1.6"><circle cx="12" cy="12" r="10.5" /><path d="M12 7v10M7 12h10" strokeWidth="2.2" /></svg>
        </AddSheet>
        <HGrip><Dots><i /><i /><i /></Dots></HGrip>
        <HScroll>
          <svg width="14" height="16"><path d="M1 8l11-7q1 0 1 1v12q0 1-1 1z" fill="#6e6e6e" /></svg>
          <HThumb />
          <svg width="14" height="16"><path d="M13 8L2 1Q1 1 1 2v12q0 1 1 1z" fill="#6e6e6e" /></svg>
        </HScroll>
      </SheetTabs>

      <StatusBar>
        <span>Ready</span>
        <Access><AccessibilityIcon />Accessibility: Unavailable</Access>
        <Views>
          <ViewButton $on aria-label="Normal view"><svg width="24" height="24" fill="none" stroke="#242424" strokeWidth="1.8"><path d="M1 1h22v21H1zM1 8h22M1 15h22M8.5 1v21M15.5 1v21" /></svg></ViewButton>
          <ViewButton aria-label="Page layout view"><svg width="26" height="24" fill="none" stroke="#242424" strokeWidth="1.8"><path d="M1 1h24v21H1zM6 4h14v15H6zM9 8h8M9 12h8M9 15h8" /></svg></ViewButton>
          <ViewButton aria-label="Page break preview"><svg width="26" height="24" fill="none" stroke="#242424" strokeWidth="1.8"><path d="M1 1h24v21H1zM1 13h15V1M8 1v12" /></svg></ViewButton>
        </Views>
        <Zoom>
          <PlainButton aria-label="Zoom out"><svg width="14" height="14" stroke="#242424" strokeWidth="1.5"><path d="M0 7h14" /></svg></PlainButton>
          <input type="range" min="10" max="192" value={zoom} onChange={(e) => setZoom(Number(e.target.value))} aria-label="Zoom" />
          <PlainButton aria-label="Zoom in"><svg width="14" height="14" stroke="#242424" strokeWidth="1.5"><path d="M0 7h14M7 0v14" /></svg></PlainButton>
          <ZoomValue>{zoom}%</ZoomValue>
        </Zoom>
      </StatusBar>

      <Taskbar>
        <Weather>
          <WeatherIcon />
          <div><b>47°F</b><span>Mostly cloudy</span></div>
        </Weather>
        <Apps>
          <TaskButton aria-label="Start"><WindowsIcon /></TaskButton>
          <TaskButton aria-label="Search"><TaskSearchIcon /></TaskButton>
          <TaskButton aria-label="Task view"><TaskViewIcon /></TaskButton>
          <TaskButton aria-label="Chat"><ChatIcon /></TaskButton>
          <TaskButton aria-label="Explorer"><FolderIcon /></TaskButton>
          <TaskButton aria-label="Store"><StoreIcon /></TaskButton>
          <TaskButton aria-label="Photos"><PhotosIcon /></TaskButton>
          <TaskButton aria-label="Your Phone"><PhoneIcon /></TaskButton>
          <TaskButton aria-label="Office"><OfficeIcon /></TaskButton>
          <TaskButton aria-label="Edge"><EdgeIcon /></TaskButton>
          <TaskButton aria-label="Chrome" $mark="#858585" $markWidth={10}><ChromeIcon /></TaskButton>
          <TaskButton aria-label="Excel" $on $mark="#8d7063" $markWidth={28}><ExcelLogo size={40} /></TaskButton>
        </Apps>
        <Tray>
          <PlainButton aria-label="Hidden icons"><svg width="20" height="12" fill="none" stroke="#242424" strokeWidth="1.8"><path d="M1 11l9-9 9 9" /></svg></PlainButton>
          <PlainButton aria-label="Touch keyboard">
            <svg width="32" height="24" fill="none" stroke="#1b1b1b" strokeWidth="2"><rect x="1" y="1" width="30" height="21" rx="3" /><path d="M5 7h22" strokeDasharray="2.5 3.5" /><path d="M9 13h14" strokeDasharray="2.5 3.5" /><path d="M6 18h20" /></svg>
          </PlainButton>
          <PlainButton aria-label="Touchpad">
            <svg width="30" height="26" fill="none" stroke="#000" strokeWidth="2.2"><rect x="1" y="1" width="28" height="23" rx="1" /><path d="M1 16h28M15 16v8" /></svg>
          </PlainButton>
          <Lang>ENG</Lang>
          <Status aria-label="Network, volume, battery">
            <svg width="28" height="24" fill="none" stroke="#1b1b1b" strokeWidth="2"><path d="M1 9c7-8 19-8 26 0M5 13c5-6 13-6 18 0M9 17c3-4 7-4 10 0" /><circle cx="14" cy="20" r="1.5" fill="#1b1b1b" /></svg>
            <svg width="28" height="24" fill="none" stroke="#1b1b1b" strokeWidth="1.8"><path d="M1 8h4l6-6v20l-6-6H1zM15 8c2 2 2 6 0 8M19 5c4 4 4 10 0 14M22 1c6 6 6 16 0 22" /></svg>
            <svg width="29" height="24" fill="none" stroke="#1b1b1b" strokeWidth="2"><path d="M14 4h11v16H9M26 9h2v6h-2" /><path d="M10 2c4 8 3 13-3 16-9-2-7-12 3-16z" fill="#1b1b1b" /><path d="M8 10L3 22M17 9c1 4-1 7-3 9" /></svg>
          </Status>
          <Clock><span>1:31 PM</span><span>4/19/2022</span></Clock>
          <Badge>3</Badge>
        </Tray>
      </Taskbar>
    </Page>
  )
}

export default App

/* ---------- styles ---------- */

const Global = createGlobalStyle`
    * {
        box-sizing: border-box;
    }

    body {
        margin: 0;
        background: #efefef;
        font-family: "Open Sans", "Noto Sans", sans-serif;
        font-size: 20px;
        color: #242424;
    }

    button, input, select {
        font: inherit;
        color: inherit;
    }

    svg {
        display: block;
        flex-shrink: 0;
        overflow: visible;
    }
`

const Page = styled.div`
    display: flex;
    flex-direction: column;
    height: 100vh;
    overflow: hidden;
`

const PlainButton = styled.button`
    display: flex;
    align-items: center;
    justify-content: center;
    border: 0;
    padding: 0;
    background: none;
    cursor: pointer;
`

const TitleBar = styled.header`
    display: grid;
    grid-template-columns: 1fr calc(27% + 6px) 1fr;
    align-items: center;
    height: 84px;
    padding-left: 28px;
    flex-shrink: 0;
`

const TitleLeft = styled.div`
    display: flex;
    align-items: center;
    white-space: nowrap;
`

const AutoSave = styled.label`
    display: flex;
    align-items: center;
    gap: 12px;
    margin: 0 20px 0 27px;
`

const Toggle = styled.span`
    display: flex;
    align-items: center;
    gap: 8px;
    width: 73px;
    height: 35px;
    padding-left: 3px;
    border: 2px solid #616161;
    border-radius: 18px;
    background: #fff;
    color: #616161;
    font-size: 18px;

    input {
        appearance: none;
        width: 0;
        height: 0;
        margin: 0 -8px 0 0;
    }
`

const Knob = styled.span`
    width: 25px;
    height: 25px;
    border-radius: 50%;
    background: #616161;
`

const FileName = styled.div`
    display: flex;
    align-items: center;
    gap: 12px;
    margin-left: 50px;
`

const SearchBox = styled.label`
    display: flex;
    align-items: center;
    gap: 20px;
    height: 56px;
    padding: 0 35px;
    border: 2px solid #d2d2d2;
    border-radius: 7px;
    background: #fafafa;

    input {
        flex: 1;
        border: 0;
        padding: 0;
        background: none;
        font-size: 22px;
        outline: 0;
    }

    input::placeholder {
        color: #616161;
        opacity: 1;
    }
`

const TitleRight = styled.div`
    display: flex;
    align-items: center;
    justify-content: flex-end;
    padding-right: 32px;
    white-space: nowrap;
`

const Avatar = styled.div`
    display: flex;
    align-items: center;
    justify-content: center;
    width: 42px;
    height: 42px;
    margin: 0 45px 0 16px;
    border-radius: 50%;
    background: #4f6bed;
    color: #fff;
    font-size: 18px;
`

const WindowButtons = styled.div`
    display: flex;
    gap: 64px;
    margin-left: 58px;
`

const TabRow = styled.nav`
    display: flex;
    align-items: stretch;
    height: 53px;
    padding: 0 21px;
    flex-shrink: 0;
`

const Tab = styled.button`
    position: relative;
    margin-right: ${(p) => (p.$file ? 13 : 0)}px;
    padding: 3px 16px 0;
    border: 0;
    background: none;
    font-size: 22px;
    font-weight: ${(p) => (p.$on ? 600 : 400)};
    white-space: nowrap;
    cursor: pointer;

    &:after {
        content: "";
        display: ${(p) => (p.$on ? 'block' : 'none')};
        position: absolute;
        left: 16px;
        right: 16px;
        bottom: 5px;
        height: 4px;
        border-radius: 2px;
        background: #0f703b;
    }
`

const Actions = styled.div`
    display: flex;
    gap: 12px;
    margin-left: auto;
    padding: 5px 0 6px;
`

const CommentsButton = styled.button`
    display: flex;
    align-items: center;
    justify-content: center;
    gap: 6px;
    width: 167px;
    padding: 3px 0 0;
    border: 2px solid #d2d2d2;
    border-radius: 8px;
    background: #fff;
    font-size: 21px;
    font-weight: 600;

    svg {
        margin-top: -4px;
    }
`

const ShareButton = styled(CommentsButton)`
    width: 115px;
    border-color: #107c41;
    background: #107c41;
    color: #fff;
`

const RibbonBar = styled.section`
    display: flex;
    height: 173px;
    margin: 0 16px 0 15px;
    padding: 4px 0 7px;
    border: 2px solid #d2d2d2;
    border-radius: 14px;
    background: #fff;
    flex-shrink: 0;
`

const Group = styled.div`
    display: flex;
    flex-direction: column;
    width: ${(p) => p.$w}px;
    border-right: 2px solid #d2d2d2;
    flex-shrink: 0;
`

const GroupBody = styled.div`
    display: flex;
    flex: 1;
    align-items: flex-start;
`

const GroupFoot = styled.div`
    display: flex;
    height: 14px;
`

const Caption = styled.div`
    flex: 1;
    font-size: 18px;
    line-height: 14px;
    text-align: center;
`

const Launcher = styled(PlainButton)`
    width: 27px;
`

const Stack = styled.div`
    padding: ${(p) => p.$top || 0}px 0 0 ${(p) => p.$left || 0}px;
`

const Row = styled.div`
    display: flex;
    align-items: center;
    height: ${(p) => (p.$tall ? 56 : 44)}px;
`

const Gap = styled.div`
    width: ${(p) => p.$w}px;
`

const Tool = styled(PlainButton)`
    width: ${(p) => p.$w}px;
    height: 42px;
    border-radius: 6px;
    color: #3b3a38;
    font-size: ${(p) => (p.$large ? 28 : 23)}px;
    font-weight: ${(p) => (p.$bold ? 700 : 400)};
    text-decoration: ${(p) => (p.$under ? 'underline' : 'none')};
    text-underline-offset: 4px;

    ${(p) => p.$serif && css`
        font-family: "Liberation Serif", serif;
        font-size: 26px;
        font-style: italic;
    `}

    ${(p) => p.$on && css`
        border: 2px solid #616161;
        background: #ebebeb;
    `}
`

const Divider = styled.div`
    align-self: center;
    width: ${(p) => p.$w}px;
    height: 42px;
    background: linear-gradient(#d2d2d2, #d2d2d2) center / 2px 100% no-repeat;
`

const TallDivider = styled.div`
    width: 2px;
    height: 110px;
    margin: 12px 0 0 7px;
    background: #d2d2d2;
`

const TextTool = styled(PlainButton)`
    gap: 8px;
    font-size: 20px;
    white-space: nowrap;
`

const BigButton = styled(PlainButton)`
    flex-direction: column;
    justify-content: flex-start;
    width: ${(p) => p.$w}px;
    padding-top: 5px;
    color: ${(p) => (p.disabled ? '#bdbdbd' : '#242424')};

    svg + span {
        margin-top: 4px;
    }
`

const BigLine = styled.span`
    display: flex;
    align-items: center;
    justify-content: center;
    gap: 7px;
    height: 28px;
    white-space: nowrap;
`

const SelectWrap = styled.div`
    display: grid;
    align-items: center;
    width: ${(p) => p.$w}px;

    > * {
        grid-area: 1 / 1;
    }

    svg {
        justify-self: end;
        margin-right: 5px;
        pointer-events: none;
    }
`

const Select = styled.select`
    appearance: none;
    width: 100%;
    height: 42px;
    padding: 2px 4px 0;
    border: 2px solid #d2d2d2;
    border-radius: 6px;
    background: #fff;
    font-size: 19px;
`

const Collapse = styled(PlainButton)`
    align-self: flex-end;
    margin: 0 12px 4px auto;
`

const FormulaRow = styled.div`
    display: flex;
    align-items: center;
    height: 66px;
    padding: 1px 14px 0 15px;
    flex-shrink: 0;
`

const NameBox = styled.div`
    display: flex;
    align-items: center;
    width: 176px;
    height: 40px;
    padding: 0 8px 0 5px;
    border: 1px solid #d2d2d2;
    border-radius: 8px;
    background: #fff;

    input {
        flex: 1;
        min-width: 0;
        border: 0;
        padding: 2px 0 0;
        background: none;
        font-size: 22px;
    }
`

const FormulaBox = styled(NameBox)`
    flex: 1;
    padding-right: 5px;
`

const Dots = styled.div`
    display: flex;
    flex-direction: column;
    align-items: center;
    gap: 4px;
    width: 35px;

    i {
        width: 4px;
        height: 3px;
        background: #a8a8a8;
    }
`

const FormulaTools = styled.div`
    display: flex;
    align-items: center;
    justify-content: space-between;
    width: 128px;
    height: 40px;
    margin-right: 7px;
    padding: 0 9px;
    border: 1px solid #d2d2d2;
    border-radius: 8px;
    background: #fff;
`

const FxButton = styled(PlainButton)`
    font-family: "Liberation Serif", serif;
    font-size: 32px;
    font-style: italic;
    line-height: 32px;
`

const SheetArea = styled.main`
    display: flex;
    flex: 1;
    min-height: 0;
`

const GridWrap = styled.div`
    position: relative;
    flex: 1;
    min-width: 0;
    overflow: hidden;
    border-right: 1px solid #a0a0a0;
    border-bottom: 1px solid #a0a0a0;
    background: #fff;
`

// the last column takes what is left, never less than a standard column
const Grid = styled.table`
    width: max(100%, 2731px);
    table-layout: fixed;
    border-collapse: separate;
    border-spacing: 0;
    white-space: nowrap;
`

const Corner = styled.td`
    height: 30px;
    padding: 0;
    border-bottom: 1px solid #a0a0a0;
    background: linear-gradient(to bottom right, transparent 50%, #dcdcdc 50%) 23px 5px / 21px 21px no-repeat #efefef;
`

const ColHead = styled.th`
    height: 30px;
    padding: 0;
    border-bottom: ${(p) => (p.$on ? '2px solid #217346' : '1px solid #a0a0a0')};
    background:
        ${(p) => (p.$before ? 'linear-gradient(#efefef, #c6c6c6) 1px 0 / 1px 100% no-repeat,' : '')}
        linear-gradient(#efefef, #c6c6c6) calc(100% - ${(p) => (p.$after ? 2 : 0)}px) 0 / 1px 100% no-repeat
        ${(p) => (p.$on ? '#e1e1e1' : '#efefef')};
    color: ${(p) => (p.$on ? green : '#444')};
    font-family: "Liberation Sans", Arial, sans-serif;
    font-size: 23px;
    font-weight: 400;
    line-height: 28px;
`

const RowHead = styled.th`
    height: ${(p) => p.$h}px;
    padding: 0 0 2px;
    border-right: ${(p) => (p.$on ? '2px solid #217346' : '1px solid #a0a0a0')};
    background: linear-gradient(to right, #efefef, #c6c6c6) 0 100% / 100% 1px no-repeat ${(p) => (p.$on ? '#e1e1e1' : '#efefef')};
    color: ${(p) => (p.$on ? green : '#444')};
    font-family: "Liberation Sans", Arial, sans-serif;
    font-size: 23px;
    font-weight: 400;
    line-height: 27px;
    vertical-align: bottom;
`

const line = (w) => (w ? w + 'px solid #000' : '1px solid #e1e1e1')

const Cell = styled.td`
    padding: 0 4px;
    border-right: ${(p) => line(p.$right)};
    border-bottom: ${(p) => line(p.$bottom)};
    background-color: ${(p) => p.$fill || '#fff'};
    color: #000;
    font-family: ${(p) => (p.$arial ? '"Liberation Sans", Arial, sans-serif' : 'Lato, sans-serif')};
    font-size: ${(p) => (p.$arial ? 22 : 24)}px;
    font-variant-ligatures: none;
    font-weight: ${(p) => (p.$bold ? 700 : 400)};
    line-height: 32px;
    text-align: ${(p) => p.$align || 'left'};
    vertical-align: bottom;

    ${(p) => p.$error && css`
        background-image: linear-gradient(to bottom right, #008000 50%, transparent 50%);
        background-size: 11px 11px;
        background-repeat: no-repeat;
    `}

    ${(p) => p.$active && css`
        position: relative;

        &:before {
            content: "";
            position: absolute;
            inset: -2px;
            border: 2px solid ${green};
        }

        &:after {
            content: "";
            position: absolute;
            right: -4px;
            bottom: -4px;
            width: 8px;
            height: 8px;
            border: solid #fff;
            border-width: 1px 0 0 1px;
            background: ${green};
        }
    `}
`

const SheetLink = styled.a`
    color: #0563c1;
`

// floats over the cells like any inserted picture, its left side cropped
const PictureFrame = styled.div`
    position: absolute;
    left: 1635px;
    top: 45px;
    width: 848px;
    overflow: hidden;
    background: #fff;
`

const PictureTable = styled.table`
    width: 862px;
    margin-left: -14px;
    table-layout: fixed;
    border-collapse: separate;
    border-spacing: 0;
    color: #111;
    font-size: 24px;
    line-height: 26px;
    white-space: nowrap;
`

const PicCell = styled.td`
    height: ${(p) => (p.$h ? p.$h + 'px' : 'auto')};
    padding: 0 4px;
    border-top: ${(p) => (p.$top ? '2px solid #111' : 0)};
    border-right: 2px solid #111;
    border-bottom: 2px solid #111;
    background: ${(p) => (p.$fill ? cyan : '#fff')};
    font-weight: ${(p) => (p.$bold ? 700 : 400)};
    text-align: ${(p) => (p.$end ? 'right' : 'center')};
    vertical-align: bottom;
`

const Stub = styled.td`
    padding: 0;
    border-top: ${(p) => (p.$top ? '2px solid #e1e1e1' : 0)};
    border-bottom: 2px solid #e1e1e1;
`

const Tail = styled.td`
    height: 11px;
    padding: 0;
    border-right: 2px solid #d2d2d2;
`

const VScroll = styled.div`
    display: flex;
    flex-direction: column;
    align-items: center;
    gap: 8px;
    width: 33px;
    padding: 8px 0 6px;
    background: #f5f5f5;
`

const VThumb = styled.div`
    flex: 1;
    width: 14px;
    margin-bottom: 26px;
    border-radius: 7px;
    background: #6e6e6e;
`

const SheetTabs = styled.div`
    display: flex;
    align-items: flex-start;
    height: 38px;
    border-bottom: 2px solid #fff;
    background: #f5f5f5;
    flex-shrink: 0;
`

const SheetNav = styled.div`
    display: flex;
    gap: 29px;
    width: 127px;
    padding: 12px 0 0 31px;
`

const SheetTab = styled.button`
    width: 74px;
    height: 34px;
    padding: 0 0 2px;
    border: 0;
    border-bottom: 2px solid ${(p) => (p.$on ? green : 'transparent')};
    background: ${(p) => (p.$on ? '#fff' : 'linear-gradient(#a8a8a8, #a8a8a8) 0 4px / 1px 28px no-repeat, linear-gradient(#a8a8a8, #a8a8a8) 100% 4px / 1px 28px no-repeat')};
    color: ${(p) => (p.$on ? green : '#444')};
    font-weight: ${(p) => (p.$on ? 700 : 400)};
    line-height: 28px;
`

const AddSheet = styled(PlainButton)`
    margin: 6px auto 0 43px;
`

const HGrip = styled.div`
    display: flex;
    align-items: center;
    height: 36px;
    background: #efefef;
`

const HScroll = styled.div`
    display: flex;
    align-items: center;
    width: 654px;
    height: 36px;
    margin-right: 33px;
    padding: 0 8px;
    border-radius: 14px;
    background: #f8f8f8;
`

const HThumb = styled.div`
    flex: 1;
    height: 14px;
    margin: 0 26px 0 8px;
    border-radius: 7px;
    background: #6e6e6e;
`

const StatusBar = styled.footer`
    display: flex;
    align-items: center;
    height: 40px;
    padding: 0 12px;
    border-bottom: 2px solid #e0e0e0;
    background: #f4f4f4;
    font-size: 18px;
    flex-shrink: 0;
`

const Access = styled.div`
    display: flex;
    align-items: center;
    gap: 2px;
    margin-left: 32px;
`

const Views = styled.div`
    display: flex;
    margin-left: auto;
`

const ViewButton = styled(PlainButton)`
    width: 70px;
    height: 38px;
    background: ${(p) => (p.$on ? '#dedede' : 'none')};
`

const Zoom = styled.div`
    display: flex;
    align-items: center;
    gap: 10px;
    margin-left: 12px;

    input {
        appearance: none;
        width: 174px;
        height: 20px;
        margin: 0;
        background: linear-gradient(#616161, #616161) center / 100% 2px no-repeat;
    }

    input::-webkit-slider-thumb {
        appearance: none;
        width: 9px;
        height: 20px;
        background: #616161;
    }
`

const ZoomValue = styled.span`
    margin-left: 12px;
`

const Taskbar = styled.footer`
    display: grid;
    grid-template-columns: 1fr auto 1fr;
    align-items: center;
    height: 82px;
    background: #efefef;
    flex-shrink: 0;
`

const Weather = styled.div`
    display: flex;
    align-items: center;
    gap: 13px;
    padding-left: 38px;

    b, span {
        display: block;
        line-height: 28px;
        font-weight: 400;
    }

    span {
        color: #616161;
    }
`

const Apps = styled.div`
    display: flex;
`

const TaskButton = styled(PlainButton)`
    position: relative;
    width: 67px;
    height: 70px;
    margin: 0 5px;
    border: ${(p) => (p.$on ? '1px solid #e4e4e4' : 0)};
    border-radius: 8px;
    background: ${(p) => (p.$on ? '#f9f9f9' : 'none')};

    &:after {
        content: "";
        display: ${(p) => (p.$mark ? 'block' : 'none')};
        position: absolute;
        bottom: 1px;
        width: ${(p) => p.$markWidth}px;
        height: 5px;
        border-radius: 3px;
        background: ${(p) => p.$mark};
    }
`

const Tray = styled.div`
    display: flex;
    align-items: center;
    justify-content: flex-end;
    gap: 38px;
    padding-right: 35px;
`

const Lang = styled.span`
    margin: 0 -6px 0 2px;
`

const Status = styled(PlainButton)`
    gap: 14px;
`

const Clock = styled.div`
    display: flex;
    flex-direction: column;
    align-items: flex-end;
    margin-left: -12px;
    line-height: 28px;
`

const Badge = styled.span`
    width: 28px;
    height: 28px;
    margin-left: -26px;
    border-radius: 50%;
    background: #8d6e63;
    color: #fff;
    font-size: 18px;
    line-height: 28px;
    text-align: center;
`
